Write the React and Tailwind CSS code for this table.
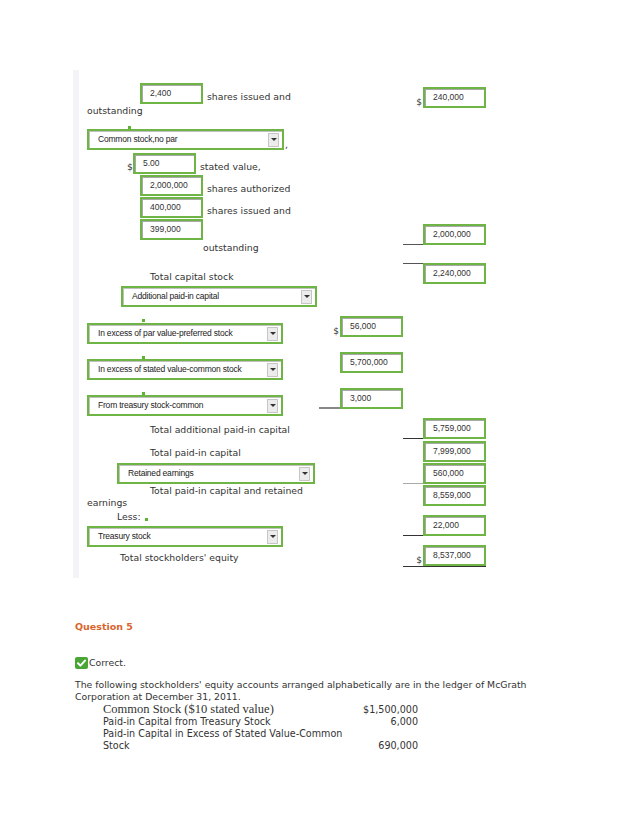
import React from 'react';

const SANS = "font-['DejaVu_Sans',sans-serif]";

function Box({ children, className = '' }) {
  return (
    <div className={`h-[21px] w-[63px] shrink-0 border-2 border-[#6fb545] bg-white shadow-[inset_1px_1px_0_#a8a8a8] pl-[8px] pt-[3px] text-[8.5px] leading-[11px] text-[#333] font-['Liberation_Sans',sans-serif] ${className}`}>
      {children}
    </div>
  );
}

function Drop({ label, className = '' }) {
  return (
    <div className={`h-[21px] shrink-0 border-2 border-[#6fb545] bg-white shadow-[inset_1px_1px_0_#c0c0c0] flex items-center justify-between pl-[9px] pr-[3px] ${className}`}>
      <span className="text-[8.5px] text-[#222] font-['Liberation_Sans',sans-serif] tracking-[-0.2px]">{label}</span>
      <div className="w-[11px] h-[14px] bg-[#ececec] border border-[#c6c6c6] flex items-center justify-center">
        <div className="w-0 h-0 border-l-[3px] border-r-[3px] border-t-[3px] border-l-transparent border-r-transparent border-t-[#333]" />
      </div>
    </div>
  );
}

function Dot({ className = '' }) {
  return <div className={`w-[3px] h-[3px] bg-[#5cb531] ${className}`} />;
}

// right column: 20px rule area + box (x 403-486)
function Right({ v, dollar, rule = '', full = false, className = '' }) {
  return (
    <div className={`flex items-end w-[83px] ${full ? 'border-b border-[#333]' : ''} ${className}`}>
      <div className={`w-[20px] h-[21px] flex items-end justify-end pr-[1px] text-[9px] leading-[11px] text-[#333] ${rule}`}>{dollar ? '$' : ''}</div>
      <Box>{v}</Box>
    </div>
  );
}

// middle column: 21px rule area + box (x 319-402)
function Mid({ v, dollar, rule = '', className = '' }) {
  return (
    <div className={`flex items-end w-[84px] ${className}`}>
      <div className={`w-[21px] h-[21px] flex items-end justify-end pr-[1px] text-[9px] leading-[11px] text-[#333] ${rule}`}>{dollar ? '$' : ''}</div>
      <Box className="w-[62px]">{v}</Box>
    </div>
  );
}

export default function App() {
  return (
    <div className={`w-[638px] h-[826px] bg-white text-[#333] text-[9.3px] ${SANS} overflow-hidden`}>
      <div className="h-[70px]" />

      {/* answer form */}
      <div className="ml-[73px] w-[500px] border-l-[6px] border-[#f3f4f8] pt-[12px] pb-[8px]">
        <div className="flex h-[22px]">
          <div className="w-[240px] flex items-end pl-[61px]">
            <Box>2,400</Box>
            <span className="ml-[4px] leading-[11px] mb-[2px]">shares issued and</span>
          </div>
          <div className="w-[84px]" />
          <Right v="240,000" dollar className="mt-[5px] h-[21px]" />
        </div>
        <div className="h-[13px] pl-[8px] leading-[13px]">outstanding</div>

        <div className="h-[35px] flex flex-col">
          <Dot className="mt-[9px] ml-[49px]" />
          <div className="flex items-end ml-[8px]">
            <Drop label="Common stock,no par" className="w-[197px]" />
            <span className="leading-[10px] ml-[1px]">,</span>
          </div>
        </div>

        <div className="flex h-[22px] items-end pl-[48px]">
          <span className="leading-[11px] mb-[2px] w-[6px]">$</span>
          <Box className="w-[62px]">5.00</Box>
          <span className="ml-[4px] leading-[11px] mb-[2px]">stated value,</span>
        </div>
        <div className="flex h-[22px] items-end pl-[61px]">
          <Box>2,000,000</Box>
          <span className="ml-[4px] leading-[11px] mb-[2px]">shares authorized</span>
        </div>
        <div className="flex h-[22px] items-end pl-[61px]">
          <Box>400,000</Box>
          <span className="ml-[4px] leading-[11px] mb-[2px]">shares issued and</span>
        </div>
        <div className="flex h-[22px]">
          <div className="w-[240px] pl-[61px] pt-[1px]">
            <Box>399,000</Box>
          </div>
          <div className="w-[84px]" />
          <Right v="2,000,000" rule="border-b border-[#555]" className="mt-[6px] h-[21px]" />
        </div>
        <div className="h-[23px] pl-[124px] leading-[15px]">outstanding</div>

        <div className="flex h-[23px]">
          <div className="w-[240px] pl-[71px] pt-[7px] leading-[13px]">Total capital stock</div>
          <div className="w-[84px]" />
          <Right v="2,240,000" rule="border-t border-[#555]" className="h-[21px] items-start" />
        </div>
        <div className="h-[22px] pl-[42px]">
          <Drop label="Additional paid-in capital" className="w-[196px]" />
        </div>

        <div className="flex h-[37px]">
          <div className="w-[240px] flex flex-col">
            <Dot className="mt-[11px] ml-[63px]" />
            <Drop label="In excess of par value-preferred stock" className="w-[196px] ml-[8px] mt-[1px] h-[20px]" />
          </div>
          <Mid v="56,000" dollar className="mt-[8px] h-[21px]" />
        </div>
        <div className="flex h-[36px]">
          <div className="w-[240px] flex flex-col">
            <Dot className="mt-[11px] ml-[63px]" />
            <Drop label="In excess of stated value-common stock" className="w-[196px] ml-[8px]" />
          </div>
          <Mid v="5,700,000" className="mt-[7px] h-[21px]" />
        </div>
        <div className="flex h-[36px]">
          <div className="w-[240px] flex flex-col">
            <Dot className="mt-[11px] ml-[63px]" />
            <Drop label="From treasury stock-common" className="w-[196px] ml-[8px]" />
          </div>
          <Mid v="3,000" rule="border-b-2 border-[#888]" className="mt-[7px] h-[21px]" />
        </div>

        <div className="flex h-[23px]">
          <div className="w-[240px] pl-[71px] pt-[6px] leading-[13px]">Total additional paid-in capital</div>
          <div className="w-[84px]" />
          <Right v="5,759,000" rule="border-b border-[#333]" className="mt-[1px] h-[21px]" />
        </div>
        <div className="flex h-[23px]">
          <div className="w-[240px] pl-[71px] pt-[6px] leading-[13px]">Total paid-in capital</div>
          <div className="w-[84px]" />
          <Right v="7,999,000" className="h-[22px]" />
        </div>
        <div className="flex h-[22px]">
          <div className="w-[240px] pl-[38px]">
            <Drop label="Retained earnings" className="w-[198px]" />
          </div>
          <div className="w-[84px]" />
          <Right v="560,000" rule="border-b border-[#aaa]" className="h-[21px]" />
        </div>
        <div className="flex h-[23px]">
          <div className="w-[240px] leading-[12px]">
            <div className="pl-[71px] whitespace-nowrap">Total paid-in capital and retained</div>
            <div className="pl-[8px]">earnings</div>
          </div>
          <div className="w-[84px]" />
          <Right v="8,559,000" className="h-[21px]" />
        </div>
        <div className="flex h-[37px]">
          <div className="w-[240px] flex flex-col">
            <div className="flex items-end pl-[38px] mt-[3px] leading-[12px]">
              <span>Less:</span>
              <Dot className="ml-[4px] mb-[2px]" />
            </div>
            <Drop label="Treasury stock" className="w-[196px] ml-[8px] mt-[3px] h-[20px]" />
          </div>
          <div className="w-[84px]" />
          <Right v="22,000" rule="border-b border-[#333]" className="mt-[6px] h-[22px]" />
        </div>
        <div className="flex h-[25px]">
          <div className="w-[240px] pl-[41px] pt-[6px] leading-[13px]">Total stockholders' equity</div>
          <div className="w-[84px]" />
          <Right v="8,537,000" dollar full className="-mt-[1px] h-[23px]" />
        </div>
      </div>

      {/* next question */}
      <div className="pl-[75px] pt-[43px]">
        <div className="text-[9.5px] font-bold leading-[12px] text-[#d9642c]">Question 5</div>
        <div className="mt-[23px] flex items-center h-[13px]">
          <svg width="13" height="12" viewBox="0 0 13 12">
            <rect x="0" y="0" width="13" height="12" rx="2" fill="#4aa634" />
            <path d="M3 6.2 L5.4 8.6 L10 3.6" stroke="#fff" strokeWidth="2" fill="none" strokeLinecap="round" strokeLinejoin="round" />
          </svg>
          <span className="ml-[1px] leading-[12px]">Correct.</span>
        </div>
        <p className="mt-[10px] w-[480px] text-[9.3px] leading-[12px]">
          The following stockholders' equity accounts arranged alphabetically are in the ledger of McGrath Corporation at December 31, 2011.
        </p>
        <div className="pl-[28px] w-[343px] text-[9.6px] leading-[12px]">
          <div className="flex justify-between items-end leading-[13px]">
            <span className="font-['Liberation_Serif',serif] text-[12.5px] leading-[13px]">Common Stock ($10 stated value)</span>
            <span>$1,500,000</span>
          </div>
          <div className="flex justify-between">
            <span>Paid-in Capital from Treasury Stock</span>
            <span>6,000</span>
          </div>
          <div className="flex justify-between items-end">
            <span className="w-[245px]">Paid-in Capital in Excess of Stated Value-Common Stock</span>
            <span>690,000</span>
          </div>
        </div>
      </div>
    </div>
  );
}
